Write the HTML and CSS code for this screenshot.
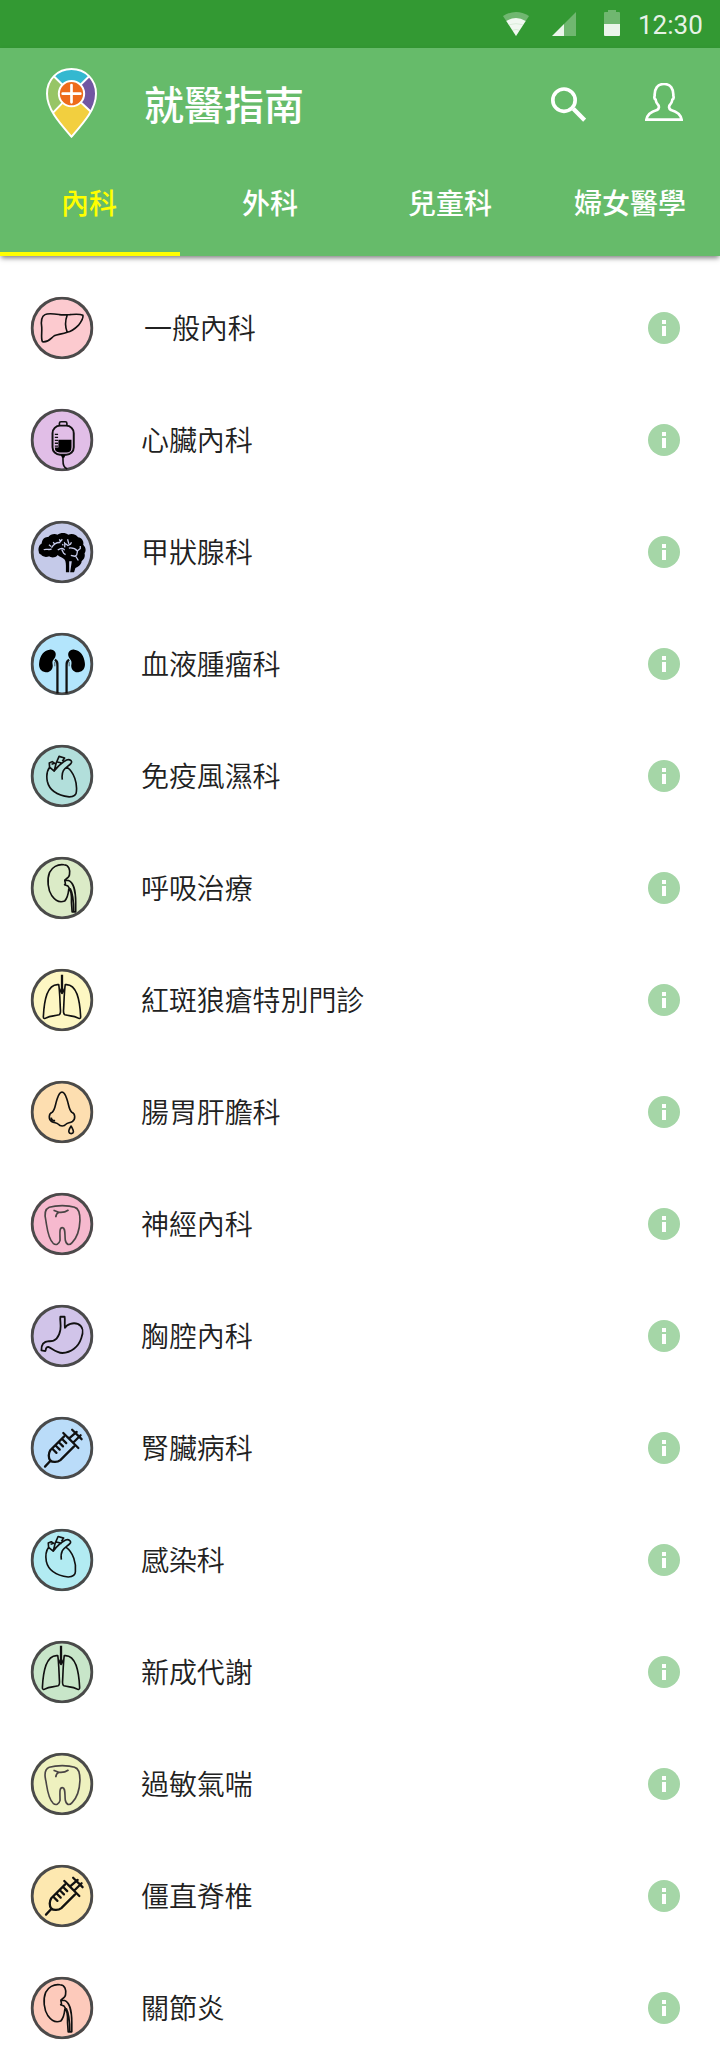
FILE: index.html
```html
<!DOCTYPE html>
<html lang="zh-Hant">
<head>
<meta charset="utf-8">
<title>就醫指南</title>
<link rel="stylesheet" href="styles.css">
</head>
<body>
<svg class="sprite" aria-hidden="true">
  <symbol id="liver" viewBox="30 48 192 192">
    <path d="M66 186C61 176 65 160 64 142C61 122 64 108 74 103C84 98 104 101 118 103C132 105 140 103 150 103C165 102 180 100 190 105C192 113 184 126 176 136C166 146 154 155 142 157C126 163 112 163 102 168C92 174 86 189 66 186ZM142 104C136 120 136 142 142 157" stroke-width="5"/>
  </symbol>
  <symbol id="drip" viewBox="30 384 192 192">
    <path d="M118 435V429Q118 424 123 424H136Q141 424 141 429V435" stroke-width="5"/>
    <rect x="97" y="436" width="65" height="89" rx="23" stroke-width="6"/>
    <path d="M115 479H155V502Q155 518 140 518H119Q104 518 104 503H115Z" fill="#000" stroke="none"/>
    <path d="M104 463H114M104 472H114M104 481H114M104 490H114M104 499H114" stroke-width="4"/>
    <path d="M129 527V541C129 556 131 563 142 569" stroke-width="5"/>
    <path d="M122 525H137L133 534H126Z" fill="#000" stroke="none"/>
  </symbol>
  <symbol id="brain" viewBox="30 60 192 192">
    <path d="M55 155C52 144 57 133 64 130C64 117 75 108 84 110C90 100 106 99 112 103C122 96 138 97 145 103C157 97 171 103 175 111C186 112 194 123 191 134C200 143 200 154 195 160C198 172 192 180 186 184C186 194 175 201 167 205L163 218H151L156 184L148 184V218H138V198C138 187 136 178 130 176C124 171 116 170 113 165C104 176 91 173 87 169C75 174 63 169 62 164C57 162 55 160 55 155Z" fill="#000" stroke="none"/>
    <path d="M70 149C78 145 88 152 94 146M86 134L93 139M99 126L104 133M94 143C100 132 109 126 121 127M118 117L121 124L127 117M127 132L130 136M113 150C124 142 131 144 134 151M125 148L131 160L137 164M134 142C135 135 136 130 133 126M143 117L147 131M136 130L144 136L152 132L155 126M147 144C160 142 168 147 173 153L182 145V138M174 151L171 165L165 169L153 166M168 169L176 182" stroke="#c5cae9" stroke-width="4"/>
  </symbol>
  <symbol id="kidneys" viewBox="30 396 192 192">
    <path d="M88 448C103 446 111 459 105 471C100 480 96 480 97 491C101 506 90 519 76 517C61 516 54 503 56 489C58 466 71 450 88 448Z" fill="#000" stroke="none"/>
    <path d="M164 448C149 446 141 459 147 471C152 480 156 480 155 491C151 506 162 519 176 517C191 516 198 503 196 489C194 466 181 450 164 448Z" fill="#000" stroke="none"/>
    <path d="M104 479C112 483 112 488 112 497V582M148 479C140 483 140 488 140 497V582" stroke-width="7"/>
    <path d="M104 486V499M148 486V499" stroke-width="2"/>
  </symbol>
  <symbol id="heart" viewBox="30 42 192 192">
    <path d="M88 111C80 122 78 138 81 154C87 182 112 197 148 202C160 201 170 198 170 186C173 160 164 127 140 110M88 111L87 98L96 94L105 100M88 111L102 123L111 111M102 123L108 99L117 78L134 83L127 93M94 102L103 99M112 95L128 99M102 123C111 111 123 98 140 89C150 85 160 93 153 100C142 112 122 115 127 149" stroke-width="5"/>
  </symbol>
  <symbol id="kidney" viewBox="30 378 192 192">
    <path d="M132 403C112 400 95 411 88 426C79 448 83 480 95 498C105 512 119 520 134 514C143 505 145 496 147 476M132 403C148 404 151 419 149 432C149 442 141 444 135 449C132 455 141 459 134 464L144 468C154 479 156 500 155 520L157 547H168V518C168 486 161 456 146 451H137M151 475C160 492 162 513 162 545" stroke-width="5"/>
  </symbol>
  <symbol id="lungs" viewBox="30 54 192 192">
    <path d="M126 73V130" stroke-width="7"/>
    <path d="M116 103C99 101 87 114 80 132C72 154 70 178 69 200C68 208 74 208 79 204C90 199 104 199 117 195C122 193 122 186 121 177C120 160 119 119 116 103ZM136 103C153 101 165 114 172 132C180 154 182 178 183 200C184 208 178 208 173 204C162 199 148 199 135 195C130 193 130 186 131 177C132 160 133 119 136 103ZM117 113L126 130L135 113" stroke-width="5"/>
  </symbol>
  <symbol id="nose" viewBox="30 390 192 192">
    <path d="M126 425C116 425 114 439 109 453C105 467 104 480 96 487C85 491 84 508 94 515C103 520 110 518 114 523C121 531 132 531 139 523C143 518 150 520 158 515C168 508 167 491 156 487C148 480 147 467 143 453C138 439 136 425 126 425ZM93 503C94 510 99 514 105 512M154 529C148 538 146 542 147 547C148 554 160 554 161 547C162 542 158 537 154 529Z" stroke-width="5"/>
  </symbol>
  <symbol id="tooth" viewBox="30 36 192 192">
    <path d="M87 81C73 87 72 105 77 124C81 148 83 176 99 191C107 198 117 195 120 182C120 161 117 143 127 143C137 143 134 160 136 181C139 196 148 199 157 189C172 174 180 145 181 121C181 101 178 84 165 81C145 74 109 74 87 81ZM100 90L116 96C111 99 107 104 107 111M116 96C127 98 137 95 146 89" stroke="#4a4545" stroke-width="5"/>
  </symbol>
  <symbol id="stomach" viewBox="30 372 192 192">
    <path d="M121 409L134 409C136 419 133 430 135 443C141 431 161 426 174 431C191 438 192 457 185 475C176 502 154 519 127 520C107 519 94 504 84 501C74 502 78 510 75 514L63 512C62 491 72 485 86 484C105 485 117 471 121 449C124 432 119 420 121 409Z" stroke-width="5.500"/>
  </symbol>
  <symbol id="syringe" viewBox="30 48 192 192">
    <path d="M74 201L90 184M132 109L90 151C84 160 84 175 90 182C97 189 112 188 121 181L163 139M130 98L176 144M157 88L186 117M142 110L160 128L183 105M147 115L171 95M98 148L109 159M108 138L119 149M118 128L129 139M128 118L139 129" stroke-width="7" stroke-linecap="round"/>
  </symbol>
  <symbol id="info" viewBox="-16 -16 32 32">
    <circle r="16" fill="#a5d6a7" stroke="none"/>
    <path d="M-2-8H2V-4H-2ZM-2-2H2V8H-2Z" fill="#fff" stroke="none"/>
  </symbol>
</svg>

<div class="status">
  <svg class="wifi" viewBox="429 36 78 72">
    <path d="M429 48Q468 24 507 48L468 108Z" fill="#fff" opacity=".3"/>
    <path d="M439 63Q468 45 497 63L468 108Z" fill="#fff" opacity=".9"/>
    <path d="M448 74Q468 68 488 74M457 91Q468 86 479 91" fill="none" stroke="#339933" stroke-width="1" opacity=".4"/>
  </svg>
  <svg class="signal" viewBox="0 0 24 24">
    <path d="M12 12L24 0V24H12Z" fill="#fff" opacity=".3"/>
    <path d="M0 24L12 12V24Z" fill="#fff" opacity=".9"/>
  </svg>
  <svg class="battery" viewBox="0 0 16 26">
    <path d="M0 14V3Q0 2 1 2H4V0H12V2H15Q16 2 16 3V14Z" fill="#fff" opacity=".3"/>
    <path d="M0 14H16V25Q16 26 15 26H1Q0 26 0 25Z" fill="#fff" opacity=".9"/>
  </svg>
  <span class="clock">12:30</span>
</div>

<header class="header">
  <div class="appbar">
    <svg class="logo" viewBox="138 204 153 210">
      <path d="M214.500 207C172 207 141 239 141 281C141 327 177 367 214.500 410C252 367 288 327 288 281C288 239 257 207 214.500 207Z" fill="#f2cf3f"/>
      <path d="M214.500 281L163 230C149 245 141 262 141 281C141 302 148 319 160 337Z" fill="#97c566"/>
      <path d="M214.500 281L163 230C177 215 195 207 214.500 207S252 215 266 230Z" fill="#34b8d0"/>
      <path d="M214.500 281L266 230C280 245 288 262 288 281C288 302 281 316 271 332Z" fill="#7156a2"/>
      <path d="M163 230L214.500 281L266 230M160 337L214.500 281L271 334M214.500 207C172 207 141 239 141 281C141 327 177 367 214.500 410C252 367 288 327 288 281C288 239 257 207 214.500 207Z" fill="none" stroke="#fff" stroke-width="6"/>
      <circle cx="214.500" cy="281" r="38" fill="#ee6b1b" stroke="#fff" stroke-width="6"/>
      <path d="M214.500 255V307M188 281H241" stroke="#fff" stroke-width="8" stroke-linecap="round"/>
    </svg>
    <h1 class="title">就醫指南</h1>
    <svg class="search" viewBox="573 260 105 104">
      <circle cx="612" cy="299" r="33.500" fill="none" stroke="#fff" stroke-width="11"/>
      <path d="M640 325L674 359" stroke="#fff" stroke-width="13"/>
    </svg>
    <svg class="person" viewBox="855 249 114 114">
      <path d="M859 359H965C962 342 948 334 933 330C926 326 926 319 930 314C936 309 936 304 937 299C942 296 941 290 940 287C941 267 932 252 912 252S883 267 884 287C883 290 882 296 887 299C888 304 888 309 894 314C898 319 898 326 891 330C876 334 862 342 859 359Z" fill="none" stroke="#fff" stroke-width="8"/>
    </svg>
  </div>
  <nav class="tabs">
    <a class="tab active">內科</a>
    <a class="tab">外科</a>
    <a class="tab">兒童科</a>
    <a class="tab">婦女醫學</a>
  </nav>
</header>

<main class="list">
  <div class="row"><span class="disc pink"><svg><use href="#liver"/></svg></span><span class="name first">一般內科</span><svg class="info"><use href="#info"/></svg></div>
  <div class="row"><span class="disc purple"><svg><use href="#drip"/></svg></span><span class="name">心臟內科</span><svg class="info"><use href="#info"/></svg></div>
  <div class="row"><span class="disc indigo"><svg><use href="#brain"/></svg></span><span class="name">甲狀腺科</span><svg class="info"><use href="#info"/></svg></div>
  <div class="row"><span class="disc sky"><svg><use href="#kidneys"/></svg></span><span class="name">血液腫瘤科</span><svg class="info"><use href="#info"/></svg></div>
  <div class="row"><span class="disc teal"><svg><use href="#heart"/></svg></span><span class="name">免疫風濕科</span><svg class="info"><use href="#info"/></svg></div>
  <div class="row"><span class="disc lime"><svg><use href="#kidney"/></svg></span><span class="name">呼吸治療</span><svg class="info"><use href="#info"/></svg></div>
  <div class="row"><span class="disc yellow"><svg><use href="#lungs"/></svg></span><span class="name">紅斑狼瘡特別門診</span><svg class="info"><use href="#info"/></svg></div>
  <div class="row"><span class="disc orange"><svg><use href="#nose"/></svg></span><span class="name">腸胃肝膽科</span><svg class="info"><use href="#info"/></svg></div>
  <div class="row"><span class="disc rose"><svg><use href="#tooth"/></svg></span><span class="name">神經內科</span><svg class="info"><use href="#info"/></svg></div>
  <div class="row"><span class="disc violet"><svg><use href="#stomach"/></svg></span><span class="name">胸腔內科</span><svg class="info"><use href="#info"/></svg></div>
  <div class="row"><span class="disc blue"><svg><use href="#syringe"/></svg></span><span class="name">腎臟病科</span><svg class="info"><use href="#info"/></svg></div>
  <div class="row"><span class="disc cyan"><svg class="raised"><use href="#heart"/></svg></span><span class="name">感染科</span><svg class="info"><use href="#info"/></svg></div>
  <div class="row"><span class="disc green"><svg class="nudged"><use href="#lungs"/></svg></span><span class="name">新成代謝</span><svg class="info"><use href="#info"/></svg></div>
  <div class="row"><span class="disc olive"><svg><use href="#tooth"/></svg></span><span class="name">過敏氣喘</span><svg class="info"><use href="#info"/></svg></div>
  <div class="row"><span class="disc amber"><svg class="right"><use href="#syringe"/></svg></span><span class="name">僵直脊椎</span><svg class="info"><use href="#info"/></svg></div>
  <div class="row"><span class="disc coral"><svg class="left"><use href="#kidney"/></svg></span><span class="name">關節炎</span><svg class="info"><use href="#info"/></svg></div>
</main>
</body>
</html>
```
FILE: styles.css
```css
* { box-sizing: border-box; }

body {
  margin: 0;
  width: 720px;
  height: 2064px;
  overflow: hidden;
  background: #fff;
  color: #212121;
  font-family: "Noto Sans CJK TC", sans-serif;
}

svg { display: block; flex: none; }
.sprite { display: none; }

.status {
  display: flex;
  height: 48px;
  padding: 0 0 0 503px;
  background: #339933;
}
.wifi { width: 26px; height: 24px; margin-top: 12px; }
.signal { width: 24px; height: 24px; margin: 12px 0 0 23px; }
.battery { width: 16px; height: 26px; margin: 10px 0 0 28px; }
.clock {
  margin-left: 18px;
  color: rgba(255, 255, 255, .9);
  font: 26px/50px Roboto, sans-serif;
}

.header {
  height: 208px;
  background: #66bb6a;
  box-shadow: 0 3px 5px -1px rgba(0, 0, 0, .5);
}
.appbar {
  display: flex;
  height: 112px;
  padding-left: 46px;
}
.logo { width: 51px; height: 70px; margin-top: 20px; }
.title {
  width: 160px;
  margin: 0 246px 0 47px;
  color: #fff;
  font-size: 40px;
  font-weight: 500;
  line-height: 110px;
  white-space: nowrap;
}
.search { width: 35px; height: 35px; margin: 39px 0 0 1px; }
.person { width: 38px; height: 38px; margin: 35px 0 0 59px; }

.tabs { display: grid; grid-template-columns: repeat(4, 180px); }
.tab {
  height: 96px;
  color: #fff;
  font-size: 28px;
  font-weight: 500;
  line-height: 84px;
  text-align: center;
}
.active {
  padding-right: 2px;
  color: #ff0;
  border-bottom: 4px solid #ff0;
}

.list { padding-top: 16px; }
.row {
  display: flex;
  align-items: center;
  height: 112px;
  padding: 0 40px 0 30px;
}
.disc {
  flex: none;
  width: 64px;
  height: 64px;
  border-radius: 50%;
  box-shadow: inset 0 0 0 3px #4a4a4a;
  transform: scale(.98);
}
.disc svg {
  width: 64px;
  height: 64px;
  fill: none;
  stroke: #111;
  stroke-linejoin: round;
}
.disc .raised { transform: translate(-1px, -4px); }
.disc .nudged { transform: translate(-1px, -1px); }
.disc .right { transform: translateX(1px); }
.disc .left { transform: translateX(-4px); }
.name {
  flex: 1;
  margin-left: 47px;
  padding-bottom: 2px;
  font-size: 28px;
  font-weight: 350;
  letter-spacing: -.1px;
  line-height: 40px;
  white-space: nowrap;
}
.first { margin-left: 50px; }
.info { width: 32px; height: 32px; }

.pink { background-color: #fccacf; }
.purple { background-color: #e1bee7; }
.indigo { background-color: #c5cae9; }
.sky { background-color: #b3e5fc; }
.teal { background-color: #b2dfdb; }
.lime { background-color: #dbebc7; }
.yellow { background-color: #fdf7c3; }
.orange { background-color: #fddeb0; }
.rose { background-color: #f6b9ce; }
.violet { background-color: #d1c4e9; }
.blue { background-color: #badcf9; }
.cyan { background-color: #b2ebf2; }
.green { background-color: #c8e6c9; }
.olive { background-color: #eef1bf; }
.amber { background-color: #fde8b0; }
.coral { background-color: #fdcabb; }
```
